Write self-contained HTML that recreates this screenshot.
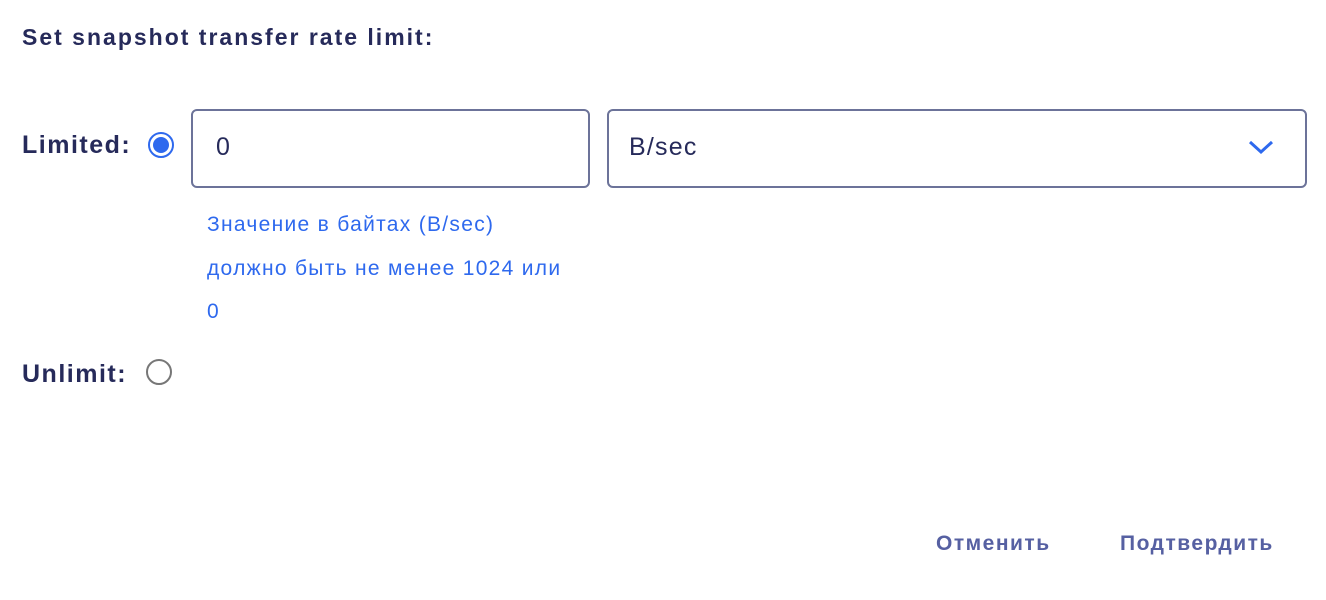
<!DOCTYPE html>
<html><head><meta charset="utf-8"><style>
body{margin:0;width:1326px;height:600px;background:#fff;font-family:"Liberation Sans",sans-serif;position:relative;overflow:hidden}
.a{position:absolute;white-space:nowrap}
.lbl{font-weight:bold;color:#262a5a;font-size:25px;letter-spacing:1.5px}
.box{position:absolute;border:2px solid #6c7399;border-radius:6px;box-sizing:border-box}
.help{color:#2e69ee;font-size:21px;letter-spacing:1.3px}
.btn{color:#5660a2;font-weight:bold;font-size:21px;letter-spacing:1.5px}
</style></head><body>
<div class="a lbl" style="left:22px;top:24px;font-size:23px;letter-spacing:2px">Set snapshot transfer rate limit:</div>
<div class="a lbl" style="left:22px;top:131px">Limited:</div>
<div class="a" style="left:148px;top:132px;width:22px;height:22px;border:2px solid #2e69ee;border-radius:50%"></div>
<div class="a" style="left:153px;top:137px;width:16px;height:16px;background:#2e69ee;border-radius:50%"></div>
<div class="box" style="left:191px;top:109px;width:399px;height:79px"></div>
<div class="a" style="left:216px;top:133px;font-size:25px;color:#262a5a">0</div>
<div class="box" style="left:607px;top:109px;width:700px;height:79px"></div>
<div class="a" style="left:629px;top:133px;font-size:25px;color:#262a5a;letter-spacing:1.2px">B/sec</div>
<svg class="a" style="left:1248px;top:138px" width="26" height="18" viewBox="0 0 26 18"><path d="M2 4 L13 14 L24 4" fill="none" stroke="#2e69ee" stroke-width="3"/></svg>
<div class="a help" style="left:207px;top:213px">Значение в байтах (B/sec)</div>
<div class="a help" style="left:207px;top:257px">должно быть не менее 1024 или</div>
<div class="a help" style="left:207px;top:300px">0</div>
<div class="a lbl" style="left:22px;top:360px">Unlimit:</div>
<div class="a" style="left:146px;top:359px;width:22px;height:22px;border:2px solid #777;border-radius:50%"></div>
<div class="a btn" style="left:936px;top:532px">Отменить</div>
<div class="a btn" style="left:1120px;top:532px">Подтвердить</div>
</body></html>
